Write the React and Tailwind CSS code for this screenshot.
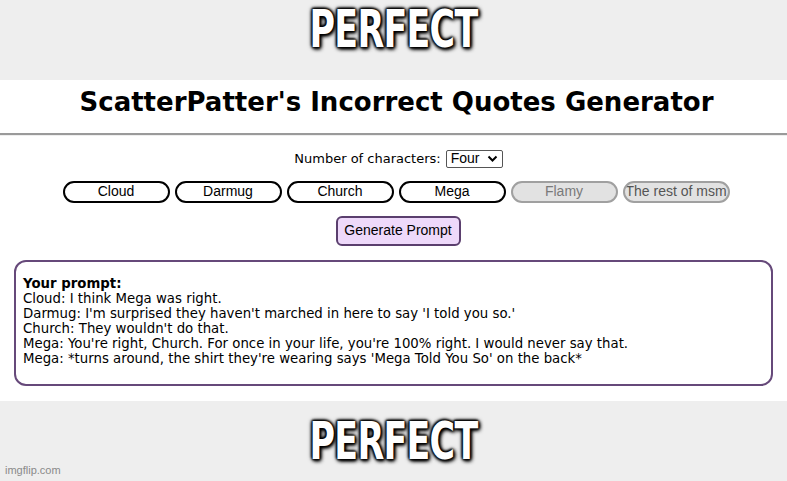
import React from "react";

function Perfect() {
  return (
    <div
      className="text-white font-bold leading-none text-[51px] tracking-[-1px] scale-x-[0.76] origin-center"
      style={{
        fontFamily: '"DejaVu Sans Condensed", "DejaVu Sans", sans-serif',
        textShadow:
          "0 0 3px #000, 0 0 3px #000, 1px 1px 4px #000, -1px -1px 3px #000, 2px 2px 5px #000, 0 0 6px #000",
      }}
    >
      PERFECT
    </div>
  );
}

const chars = ["Cloud", "Darmug", "Church", "Mega"];

export default function App() {
  return (
    <div className="w-[787px] h-[481px] bg-white overflow-hidden flex flex-col">
      <div className="h-[80px] bg-[#eeeeee] flex justify-center pt-[4px] shrink-0">
        <Perfect />
      </div>
      <div className="flex-1 flex flex-col">
        <h1
          className="text-center text-[26px] font-bold text-black mt-[7px] pl-[6px] leading-[30px]"
          style={{ fontFamily: '"DejaVu Sans", Verdana, sans-serif' }}
        >
          ScatterPatter's Incorrect Quotes Generator
        </h1>
        <div className="mt-[16px] border-t-2 border-t-[#9a9a9a] border-b border-b-[#eeeeee] h-0"></div>
        <div
          className="mt-[13px] flex justify-center items-center gap-[5px] pl-[10px] text-[13px] text-black"
          style={{ fontFamily: '"DejaVu Sans", Verdana, sans-serif' }}
        >
          <span>Number of characters:</span>
          <div
            className="w-[57px] h-[18px] border border-[#555] rounded-[2px] flex items-center justify-between pl-[4px] pr-[4px] text-[14px]"
            style={{ fontFamily: '"Liberation Sans", Arial, sans-serif' }}
          >
            <span>Four</span>
            <svg width="11" height="8" viewBox="0 0 11 8">
              <path d="M1.5 1.5 L5.5 5.5 L9.5 1.5" fill="none" stroke="#000" strokeWidth="2" />
            </svg>
          </div>
        </div>
        <div
          className="mt-[12px] flex justify-center gap-[5px] pl-[5px] text-[14px]"
          style={{ fontFamily: '"Liberation Sans", Arial, sans-serif' }}
        >
          {chars.map((c) => (
            <div
              key={c}
              className="w-[107px] h-[22px] rounded-full border-2 border-black flex items-center justify-center text-black"
            >
              {c}
            </div>
          ))}
          <div className="w-[107px] h-[22px] rounded-full border-2 border-[#a0a0a0] bg-[#e2e2e2] flex items-center justify-center text-[#7a7a7a]">
            Flamy
          </div>
          <div className="w-[107px] h-[22px] rounded-full border-2 border-[#a0a0a0] bg-[#e2e2e2] flex items-center overflow-hidden whitespace-nowrap text-[#555] pl-[1px]">
            The rest of msm
          </div>
        </div>
        <div className="mt-[13px] flex justify-center pl-[9px]">
          <div
            className="w-[125px] h-[30px] rounded-[6px] border-2 border-[#5b3f6e] bg-[#eed9fa] flex items-center justify-center text-[14px] text-black"
            style={{ fontFamily: '"Liberation Sans", Arial, sans-serif' }}
          >
            Generate Prompt
          </div>
        </div>
        <div
          className="mt-[14px] mx-[14px] h-[126px] rounded-[12px] border-2 border-[#66497a] px-[7px] pt-[14px] text-[13.3px] leading-[15px] text-black"
          style={{ fontFamily: '"DejaVu Sans", Verdana, sans-serif' }}
        >
          <div className="font-bold">Your prompt:</div>
          <div>Cloud: I think Mega was right.</div>
          <div>Darmug: I'm surprised they haven't marched in here to say 'I told you so.'</div>
          <div>Church: They wouldn't do that.</div>
          <div>Mega: You're right, Church. For once in your life, you're 100% right. I would never say that.</div>
          <div>Mega: *turns around, the shirt they're wearing says 'Mega Told You So' on the back*</div>
        </div>
      </div>
      <div className="h-[80px] bg-[#eeeeee] relative flex justify-center pt-[15px] shrink-0">
        <Perfect />
        <span
          className="absolute left-[5px] bottom-[3px] text-[11px] text-[#8a8a8a]"
          style={{ fontFamily: '"Liberation Sans Narrow", "Liberation Sans", Arial, sans-serif' }}
        >
          imgflip.com
        </span>
      </div>
    </div>
  );
}
